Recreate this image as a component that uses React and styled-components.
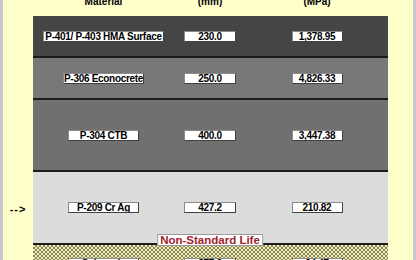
import React from 'react';
import styled, { createGlobalStyle } from 'styled-components';

const GlobalStyle = createGlobalStyle`
  html, body {
    margin: 0;
    padding: 0;
    background: #ffffcc;
  }
  body {
    font-family: "Liberation Sans", Arial, sans-serif;
  }
`;

const layers = [
  { material: 'P-401/ P-403 HMA Surface', width: 121, thick: '230.0', modulus: '1,378.95', tone: '#454545', height: 40 },
  { material: 'P-306 Econocrete', width: 81, thick: '250.0', modulus: '4,826.33', tone: '#787878', height: 40 },
  { material: 'P-304 CTB', width: 71, thick: '400.0', modulus: '3,447.38', tone: '#707070', height: 70 },
  { material: 'P-209 Cr Ag', width: 71, thick: '427.2', modulus: '210.82', tone: '#dcdcdc', height: 71, current: true },
  { material: 'Subgrade', width: 71, thick: '277.3', modulus: '34.47', checker: true, height: 36, label: 'Non-Standard Life' },
];

const App = () => {
  return (
    <>
      <GlobalStyle />
      <Page>
        <Header>
          <span />
          <HeadCell>Layer<br />Material</HeadCell>
          <HeadCell>Thickness<br />(mm)</HeadCell>
          <HeadCell>Modulus<br />(MPa)</HeadCell>
        </Header>
        {layers.map((l) => (
          <LayerRow key={l.material}>
            <Marker>{l.current ? '-->' : ''}</Marker>
            <Band $tone={l.tone} $checker={l.checker} $h={l.height}>
              {l.label && <LifeTag>{l.label}</LifeTag>}
              <Field $w={l.width}>{l.material}</Field>
              <Field $w={52}>{l.thick}</Field>
              <Field $w={51}>{l.modulus}</Field>
            </Band>
          </LayerRow>
        ))}
      </Page>
    </>
  );
};

const Page = styled.div`
  width: 416px;
  height: 260px;
  box-sizing: border-box;
  overflow: hidden;
  background: #ffffcc;
  border-left: 3px solid #c8c8c8;
  border-right: 3px solid #c8c8c8;
  display: flex;
  flex-direction: column;
`;

const Header = styled.div`
  display: grid;
  grid-template-columns: 30px 141px 72px 142px;
  margin-top: -15px;
  padding-bottom: 9px;
  font-size: 10px;
  line-height: 11px;
  font-weight: bold;
  color: #000;
`;

const HeadCell = styled.div`
  text-align: center;
  white-space: nowrap;
`;

const LayerRow = styled.div`
  display: grid;
  grid-template-columns: 30px 355px;
  flex-shrink: 0;
`;

const Marker = styled.div`
  display: flex;
  align-items: center;
  justify-content: center;
  font-size: 11px;
  font-weight: bold;
  letter-spacing: 1px;
  color: #000;
`;

const Band = styled.div`
  position: relative;
  height: ${(p) => p.$h}px;
  display: grid;
  grid-template-columns: 141px 72px 142px;
  align-items: center;
  justify-items: center;
  background: ${(p) =>
    p.$checker
      ? 'repeating-conic-gradient(#8e8a50 0 25%, #ecebc4 0 50%) 0 0 / 4px 4px'
      : p.$tone};
  border-bottom: ${(p) => (p.$checker ? 'none' : '2px solid #1c1c1c')};
`;

const Field = styled.div`
  width: ${(p) => p.$w}px;
  height: 11px;
  box-sizing: border-box;
  background: #fff;
  border: 1px solid #8a8a8a;
  border-right-color: #404040;
  border-bottom-color: #404040;
  font-size: 10px;
  line-height: 9px;
  font-weight: bold;
  letter-spacing: -0.3px;
  color: #000;
  text-align: center;
  white-space: nowrap;
  overflow: hidden;
`;

const LifeTag = styled.div`
  position: absolute;
  top: -11px;
  left: 177px;
  transform: translateX(-50%);
  z-index: 1;
  padding: 0 2px;
  height: 12px;
  box-sizing: border-box;
  background: #fff;
  border: 1px solid #9a9a9a;
  color: #a0222c;
  font-size: 11.5px;
  line-height: 10px;
  font-weight: bold;
  white-space: nowrap;
`;

export default App;
